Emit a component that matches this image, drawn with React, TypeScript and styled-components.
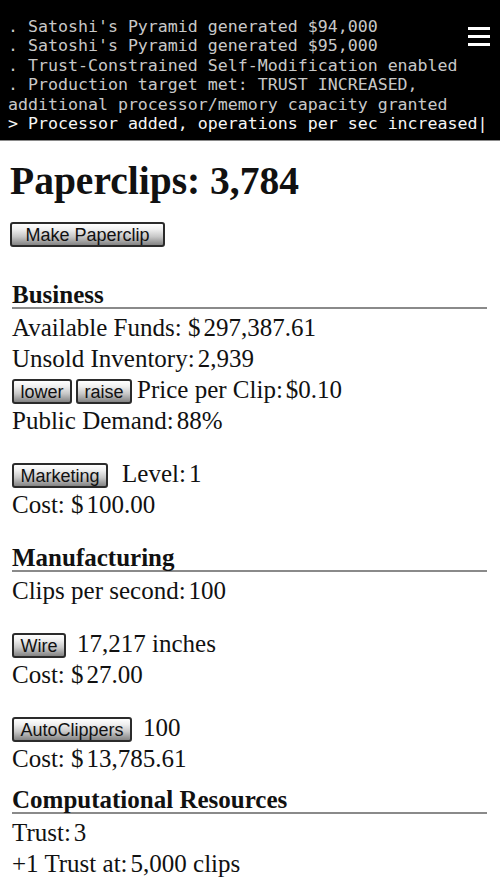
import React from "react";
import styled, { createGlobalStyle } from "styled-components";

const GlobalStyle = createGlobalStyle`
  html, body {
    margin: 0;
    padding: 0;
    background: #ffffff;
  }
  body {
    font-family: "Liberation Serif", "Times New Roman", serif;
    color: #111111;
  }
`;

const Console = styled.header`
  position: relative;
  background: #000000;
  padding: 17px 8px 7px;
  border-bottom: 1px solid #8a8a8a;
  font-family: "DejaVu Sans Mono", "Liberation Mono", monospace;
  font-size: 16.6px;
  line-height: 19.4px;
  white-space: pre;
`;

const ConsoleLine = styled.div<{ $current?: boolean }>`
  color: ${(p) => (p.$current ? "#f6f6f6" : "#c8c8c8")};
`;

const MenuButton = styled.div`
  position: absolute;
  top: 27px;
  right: 10px;
  width: 22px;
  display: flex;
  flex-direction: column;
  gap: 5px;
  cursor: pointer;
`;

const MenuBar = styled.span`
  display: block;
  height: 3px;
  background: #ffffff;
`;

const Main = styled.main`
  padding: 0 13px 0 10px;
`;

const Title = styled.h1`
  margin: 18px 0 0;
  font-size: 39.5px;
  line-height: 45px;
  font-weight: bold;
`;

const GameButton = styled.button<{ $wide?: boolean }>`
  font-family: "Liberation Sans", Arial, sans-serif;
  font-size: 18px;
  line-height: 19px;
  color: #111111;
  padding: 2px ${(p) => (p.$wide ? "13.5px" : "6.5px")} 0;
  border: 2px solid #2b2b2b;
  border-radius: 3px;
  background: linear-gradient(to bottom, #ffffff 0%, #f0f0f0 25%, #c8c8c8 60%, #949494 90%, #858585 100%);
  margin: 0;
  cursor: pointer;
`;

const TopAction = styled.div`
  margin-top: 18px;
  display: flex;
`;

const Section = styled.section<{ $spaceAbove: number }>`
  padding-left: 2px;
  margin-top: ${(p) => p.$spaceAbove}px;
`;

const Heading = styled.div`
  font-weight: bold;
  font-size: 25px;
  line-height: 25px;
  border-bottom: 2px solid #8a8a8a;
  margin-bottom: 3px;
`;

const Group = styled.div<{ $spaced?: boolean }>`
  margin-top: ${(p) => (p.$spaced ? "22px" : "0")};
`;

const Line = styled.div`
  font-size: 25px;
  line-height: 31px;
  white-space: nowrap;
`;

const ActionLine = styled.div<{ $gap: number }>`
  display: flex;
  align-items: baseline;
  gap: ${(p) => p.$gap}px;
  font-size: 25px;
  line-height: 31px;
  white-space: nowrap;
`;

const ButtonPair = styled.span`
  display: inline-flex;
  align-items: baseline;
  gap: 4px;
`;

/* value printed right after a label's colon, with a narrow gap */
const Value = styled.span`
  margin-left: 3px;
`;

/* dollar amount, the figure set a little apart from the sign */
const Amount = styled.span`
  margin-left: 3px;
`;

const logLines = [
  ". Satoshi's Pyramid generated $94,000",
  ". Satoshi's Pyramid generated $95,000",
  ". Trust-Constrained Self-Modification enabled",
  ". Production target met: TRUST INCREASED,",
  "additional processor/memory capacity granted",
];

export default function App() {
  return (
    <>
      <GlobalStyle />
      <Console>
        {logLines.map((l, i) => (
          <ConsoleLine key={i}>{l}</ConsoleLine>
        ))}
        <ConsoleLine $current>{"> Processor added, operations per sec increased|"}</ConsoleLine>
        <MenuButton aria-label="menu">
          <MenuBar />
          <MenuBar />
          <MenuBar />
        </MenuButton>
      </Console>

      <Main>
        <Title>Paperclips: 3,784</Title>
        <TopAction>
          <GameButton $wide>Make Paperclip</GameButton>
        </TopAction>

        <Section $spaceAbove={35}>
          <Heading>Business</Heading>
          <Line>
            Available Funds: $<Amount>297,387.61</Amount>
          </Line>
          <Line>
            Unsold Inventory:<Value>2,939</Value>
          </Line>
          <ActionLine $gap={5}>
            <ButtonPair>
              <GameButton>lower</GameButton>
              <GameButton>raise</GameButton>
            </ButtonPair>
            <span>
              Price per Clip:<Value>$0.10</Value>
            </span>
          </ActionLine>
          <Line>
            Public Demand:<Value>88%</Value>
          </Line>

          <Group $spaced>
            <ActionLine $gap={14}>
              <GameButton>Marketing</GameButton>
              <span>
                Level:<Value>1</Value>
              </span>
            </ActionLine>
            <Line>
              Cost: $<Amount>100.00</Amount>
            </Line>
          </Group>
        </Section>

        <Section $spaceAbove={25}>
          <Heading>Manufacturing</Heading>
          <Line>
            Clips per second:<Value>100</Value>
          </Line>

          <Group $spaced>
            <ActionLine $gap={11}>
              <GameButton>Wire</GameButton>
              <span>17,217 inches</span>
            </ActionLine>
            <Line>
              Cost: $<Amount>27.00</Amount>
            </Line>
          </Group>

          <Group $spaced>
            <ActionLine $gap={11}>
              <GameButton>AutoClippers</GameButton>
              <span>100</span>
            </ActionLine>
            <Line>
              Cost: $<Amount>13,785.61</Amount>
            </Line>
          </Group>
        </Section>

        <Section $spaceAbove={13}>
          <Heading>Computational Resources</Heading>
          <Line>
            Trust:<Value>3</Value>
          </Line>
          <Line>
            +1 Trust at:<Value>5,000 clips</Value>
          </Line>
        </Section>
      </Main>
    </>
  );
}
